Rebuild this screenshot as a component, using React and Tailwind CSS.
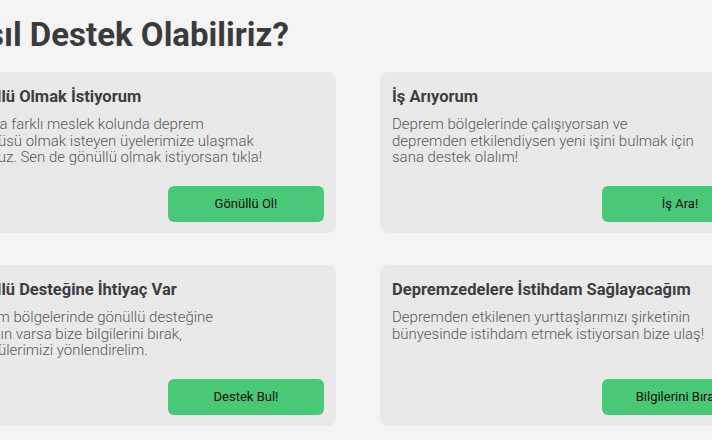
import React from 'react';

const cards = [
    {
        title: 'Gönüllü Olmak İstiyorum',
        lines: ['Sahada farklı meslek kolunda deprem', 'gönüllüsü olmak isteyen üyelerimize ulaşmak', 'istiyoruz. Sen de gönüllü olmak istiyorsan tıkla!'],
        button: 'Gönüllü Ol!',
    },
    {
        title: 'İş Arıyorum',
        lines: ['Deprem bölgelerinde çalışıyorsan ve', 'depremden etkilendiysen yeni işini bulmak için', 'sana destek olalım!'],
        button: 'İş Ara!',
    },
    {
        title: 'Gönüllü Desteğine İhtiyaç Var',
        lines: ['Deprem bölgelerinde gönüllü desteğine', 'ihtiyacın varsa bize bilgilerini bırak,', 'gönüllülerimizi yönlendirelim.'],
        button: 'Destek Bul!',
    },
    {
        title: 'Depremzedelere İstihdam Sağlayacağım',
        lines: ['Depremden etkilenen yurttaşlarımızı şirketinin', 'bünyesinde istihdam etmek istiyorsan bize ulaş!'],
        button: 'Bilgilerini Bırak!',
    },
];

const App = () => {
    return (
        <div className="w-full min-h-screen bg-[#f4f4f4] flex justify-center overflow-hidden font-['Roboto',sans-serif]">
            <div className="w-[824px] shrink-0 ml-[4px] pt-4">
                <h1 className="text-[33px] font-bold text-[#3b3b3e] leading-[38px] mb-[18px]">Nasıl Destek Olabiliriz?</h1>

                <div className="grid grid-cols-2 gap-x-[44px] gap-y-[32px]">
                    {cards.map((card) => (
                        <div key={card.title} className="bg-[#e9e9e9] rounded-lg h-[161px] px-3 pt-[13px] pb-[11px] flex flex-col">
                            <h3 className="text-[16.5px] font-bold text-[#3d3d3f] leading-6">{card.title}</h3>
                            <p className="mt-[7px] text-[15px] font-light text-[#58585a] leading-[16.5px] whitespace-nowrap">
                                {card.lines.map((line, i) => (
                                    <React.Fragment key={i}>
                                        {line}
                                        {i < card.lines.length - 1 && <br />}
                                    </React.Fragment>
                                ))}
                            </p>
                            <button className="mt-auto self-end w-[156px] h-[36px] rounded-md bg-[#49c978] text-[13px] font-normal text-[#0d0d0d]">
                                {card.button}
                            </button>
                        </div>
                    ))}
                </div>
            </div>
        </div>
    );
};

export default App;
